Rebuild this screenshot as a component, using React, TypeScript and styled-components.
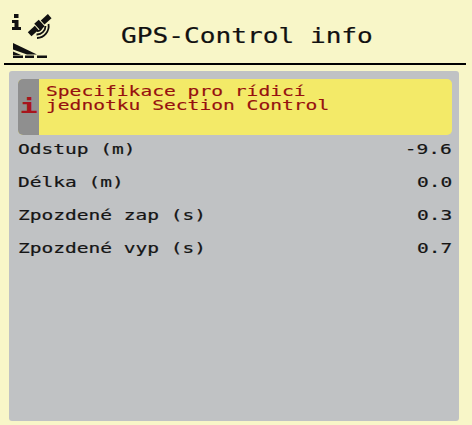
import React from 'react';
import styled, { createGlobalStyle } from 'styled-components';

const GlobalStyle = createGlobalStyle`
  html, body {
    margin: 0;
    padding: 0;
    background: #f8f6c8;
  }
`;

const Screen = styled.div`
  width: 472px;
  height: 425px;
  overflow: hidden;
  background: #f8f6c8;
  font-family: "DejaVu Sans Mono", monospace;
`;

const Header = styled.header`
  height: 63px;
  margin: 0 6px 0 4px;
  border-bottom: 2px solid #000;
  display: flex;
  align-items: center;
`;

const IconBox = styled.div`
  width: 56px;
  height: 63px;
  flex: none;
  align-self: flex-start;
`;

const Title = styled.h1`
  margin: 9px 0 0 61px;
  font-size: 21px;
  font-weight: 400;
  color: #111;
  white-space: pre;
  -webkit-text-stroke: 0.2px #111;
  transform: scaleX(1.245);
  transform-origin: left center;
`;

const Panel = styled.main`
  height: 350px;
  margin: 6px 13px 0 9px;
  padding: 8px 7px 0 9px;
  box-sizing: border-box;
  background: #c0c2c4;
  border-radius: 3px;
`;

const Message = styled.div`
  height: 56px;
  display: flex;
  border-radius: 5px;
  overflow: hidden;
  background: #f3ea68;
`;

const MessageMark = styled.div`
  width: 21px;
  flex: none;
  box-sizing: border-box;
  padding-top: 14px;
  background: #8f8f8f;
  color: #a8141c;
  font-size: 19px;
  line-height: 26px;
  text-align: center;
`;

const MarkGlyph = styled.span`
  display: inline-block;
  font-weight: 700;
  transform: scaleX(1.6);
`;

const MessageText = styled.div`
  padding: 5px 0 0 5px;
  color: #96100f;
  font-size: 14px;
  line-height: 14px;
  white-space: pre;
  -webkit-text-stroke: 0.15px #96100f;
  transform: scaleX(1.4);
  transform-origin: left top;
`;

const Rows = styled.div`
  display: flex;
  flex-direction: column;
  margin-top: -3px;
`;

const Row = styled.div`
  height: 33px;
  display: flex;
  align-items: center;
  justify-content: space-between;
  color: #151515;
  font-size: 14px;
  white-space: pre;
  -webkit-text-stroke: 0.2px #151515;
`;

const Label = styled.span`
  transform: scaleX(1.395);
  transform-origin: left center;
`;

const Value = styled.span`
  transform: scaleX(1.395);
  transform-origin: right center;
`;

const rows = [
  ['Odstup (m)', '-9.6'],
  ['Délka (m)', '0.0'],
  ['Zpozdené zap (s)', '0.3'],
  ['Zpozdené vyp (s)', '0.7'],
];

const HeaderIcon: React.FC = () => (
  <svg width="56" height="63" viewBox="0 0 56 63" fill="none">
    {/* info mark */}
    <g fill="#111">
      <rect x="10" y="14" width="4.500" height="4" />
      <path d="M8 20h6.500v7H17v3H8v-3h2.500v-4H8z" />
    </g>
    {/* satellite */}
    <g fill="#111" transform="rotate(-42 35.500 25)">
      <rect x="22" y="22.500" width="9.500" height="5.500" />
      <rect x="32.500" y="20.500" width="6" height="9" />
      <rect x="39.500" y="22.500" width="9.500" height="5.500" />
    </g>
    <g stroke="#111" strokeWidth="1.800">
      <path d="M33 31a5 5 0 0 0 5-4.500" />
      <path d="M32.500 34.500a8.500 8.500 0 0 0 9-8.500" />
      <path d="M33 38a12 12 0 0 0 11.500-14" />
    </g>
    {/* boom and sections */}
    <g fill="#111">
      <path d="M9 43v6.500l14 5h10z" />
      <path d="M9 50.500l12 4.500h-12z" fill="#f8f6c8" />
      <path d="M9 51.500l8 3.500h-8z" />
      <rect x="9" y="55.500" width="10" height="2.500" />
      <rect x="21" y="55.500" width="9" height="2.500" />
      <rect x="33" y="55.500" width="10" height="2.500" />
    </g>
  </svg>
);

const App: React.FC = () => (
  <Screen>
    <GlobalStyle />
    <Header>
      <IconBox>
        <HeaderIcon />
      </IconBox>
      <Title>GPS-Control info</Title>
    </Header>
    <Panel>
      <Message>
        <MessageMark>
          <MarkGlyph>i</MarkGlyph>
        </MessageMark>
        <MessageText>{'Specifikace pro rídicí\njednotku Section Control'}</MessageText>
      </Message>
      <Rows>
        {rows.map(([label, value]) => (
          <Row key={label}>
            <Label>{label}</Label>
            <Value>{value}</Value>
          </Row>
        ))}
      </Rows>
    </Panel>
  </Screen>
);

export default App;
